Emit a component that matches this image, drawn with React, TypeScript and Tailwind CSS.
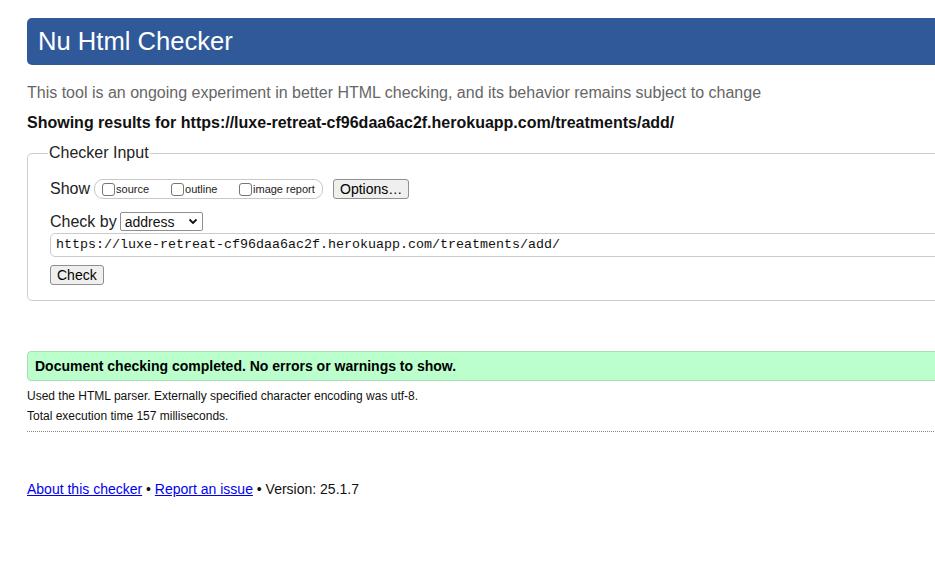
// App.tsx — Nu Html Checker result page (no-errors state).
const URL = "https://luxe-retreat-cf96daa6ac2f.herokuapp.com/treatments/add/";

function Box({ label }: { label: string }) {
  return (
    <label className="flex items-center gap-[1px]">
      <span className="h-[13px] w-[13px] rounded-[3px] border border-[#767676] bg-white" />
      <span className="text-[11px] leading-none text-[#222]">{label}</span>
    </label>
  );
}

function Btn({ children }: { children: React.ReactNode }) {
  return (
    <button className="flex h-[20px] items-center rounded-[3px] border border-[#8f8f8f] bg-[#efefef] px-[6px] text-[14px] leading-none text-black">
      {children}
    </button>
  );
}

export default function App() {
  return (
    <div className="h-[568px] w-[935px] overflow-hidden bg-white font-['Liberation_Sans',Arial,sans-serif] text-[#111]">
      <div className="w-[1100px] pl-[27px] pt-[18px]">
        <h1 className="flex h-[47px] items-center rounded-[5px] bg-[#30599a] pl-[11px] text-[25.6px] text-white">
          Nu Html Checker
        </h1>

        <p className="mt-[18px] text-[16px] leading-[20px] text-[#666]">
          This tool is an ongoing experiment in better HTML checking, and its behavior remains subject to change
        </p>
        <p className="mt-[10px] text-[16px] font-bold leading-[20px] text-[#111]">Showing results for {URL}</p>

        <fieldset className="mt-[10px] h-[158px] rounded-[5px] border border-[#ccc] px-[22px]">
          <legend className="ml-[-2px] px-[1px] text-[16px] leading-[20px] text-[#222]">Checker Input</legend>

          <div className="mt-[16px] flex h-[20px] items-center">
            <span className="text-[16px] leading-[20px] text-[#222]">Show</span>
            <div className="ml-[4px] flex h-[20px] w-[229px] items-center rounded-[9px] border border-[#c8c8c8] pl-[7px]">
              <div className="w-[69px]"><Box label="source" /></div>
              <div className="w-[68px]"><Box label="outline" /></div>
              <Box label="image report" />
            </div>
            <div className="ml-[10px]">
              <Btn>Options…</Btn>
            </div>
          </div>

          <div className="mt-[13px] flex h-[19px] items-center">
            <span className="text-[16px] leading-[19px] text-[#222]">Check by</span>
            <div className="ml-[3px] flex h-[19px] w-[83px] items-center justify-between rounded-[2px] border border-[#8f8f8f] bg-white px-[4px] text-[14px] leading-none">
              <span>address</span>
              <svg width="10" height="7" viewBox="0 0 10 7">
                <path d="M1.5 1.5 L5 5 L8.5 1.5" fill="none" stroke="#111" strokeWidth="1.8" />
              </svg>
            </div>
          </div>

          <div className="mt-[2px] flex h-[24px] items-center rounded-[5px] border border-[#ccc] pl-[5px] font-['Liberation_Mono','DejaVu_Sans_Mono',monospace] text-[13.33px] text-[#111]">
            {URL}
          </div>

          <div className="mt-[8px] flex">
            <Btn>Check</Btn>
          </div>
        </fieldset>

        <div className="mt-[50px] flex h-[30px] items-center rounded-[4px] border border-[#aaddb5] bg-[#bbffcc] pl-[7px] text-[14px] font-bold text-black">
          Document checking completed. No errors or warnings to show.
        </div>

        <p className="mt-[8px] text-[12px] leading-[14px] text-[#111]">
          Used the HTML parser. Externally specified character encoding was utf-8.
        </p>
        <p className="mt-[6px] text-[12px] leading-[14px] text-[#111]">Total execution time 157 milliseconds.</p>
        <div className="mt-[8px] border-b border-dotted border-[#888]" />

        <p className="mt-[48px] text-[14px] leading-[18px] text-[#111]">
          <a href="#" className="text-[#0000ee] underline">About this checker</a> •{" "}
          <a href="#" className="text-[#0000ee] underline">Report an issue</a> • Version: 25.1.7
        </p>
      </div>
    </div>
  );
}
